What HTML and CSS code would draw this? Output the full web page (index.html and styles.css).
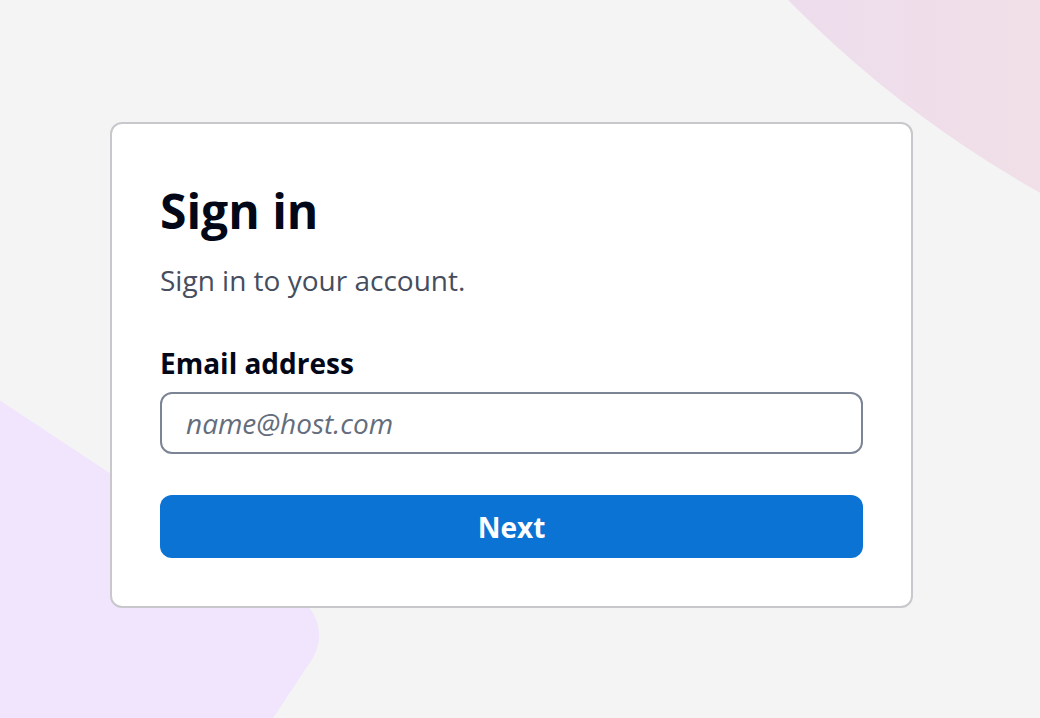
FILE: index.html
```html
<!DOCTYPE html>
<html lang="en">
<head>
<meta charset="utf-8">
<title>Sign in</title>
<link rel="stylesheet" href="styles.css">
</head>
<body>
<div class="bg" aria-hidden="true">
  <div class="bg-shape bg-top"></div>
  <div class="bg-shape bg-bottom"></div>
</div>
<main class="page">
  <form class="card">
    <h1 class="title">Sign in</h1>
    <p class="subtitle">Sign in to your account.</p>
    <label class="label" for="email">Email address</label>
    <input class="input" id="email" type="email" placeholder="name@host.com">
    <button class="button" type="button">Next</button>
  </form>
</main>
</body>
</html>
```

FILE: styles.css
```css
* { box-sizing: border-box; }
html, body { margin: 0; height: 100%; }
body {
  background: #f4f4f4;
  font-family: "Open Sans", "Noto Sans", sans-serif;
  overflow: hidden;
  position: relative;
}
.bg {
  position: absolute;
  inset: 0;
  overflow: hidden;
  pointer-events: none;
}
.bg-shape { position: absolute; }
.bg-top {
  left: 470px;
  top: -1895px;
  width: 2230px;
  height: 2230px;
  border-radius: 50%;
  background: linear-gradient(90deg, #e9d9f3 0%, #efdeea 20%, #f1e1e4 30%, #f1e1e4 100%);
}
.bg-bottom {
  left: -264px;
  top: 623px;
  width: 600px;
  height: 600px;
  border-radius: 44px;
  transform-origin: top right;
  transform: rotate(33.5deg);
  background: #f1e4fd;
}
.page {
  position: relative;
  padding: 122px 0 0 110px;
}
.card {
  width: 803px;
  background: #ffffff;
  border: 2px solid #c8c8cc;
  border-radius: 12px;
  padding: 55px 48px 48px 48px;
  display: flex;
  flex-direction: column;
}
.title {
  margin: 0;
  font-size: 48px;
  line-height: 64px;
  font-weight: 700;
  color: #030819;
}
.subtitle {
  margin: 17px 0 0;
  font-size: 28px;
  line-height: 40px;
  color: #454d5e;
}
.label {
  margin-top: 43px;
  font-size: 28px;
  line-height: 40px;
  font-weight: 700;
  color: #030819;
}
.input {
  margin-top: 9px;
  height: 62px;
  border: 2px solid #7b8595;
  border-radius: 12px;
  padding: 0 24px;
  font-family: inherit;
  font-size: 28px;
  color: #030819;
  background: #fff;
  outline: none;
}
.input::placeholder { color: #646d7c; font-style: italic; }
.button {
  margin-top: 41px;
  height: 63px;
  border: 0;
  border-radius: 12px;
  background: #0b73d3;
  color: #ffffff;
  font-family: inherit;
  font-size: 28px;
  font-weight: 700;
}
```
